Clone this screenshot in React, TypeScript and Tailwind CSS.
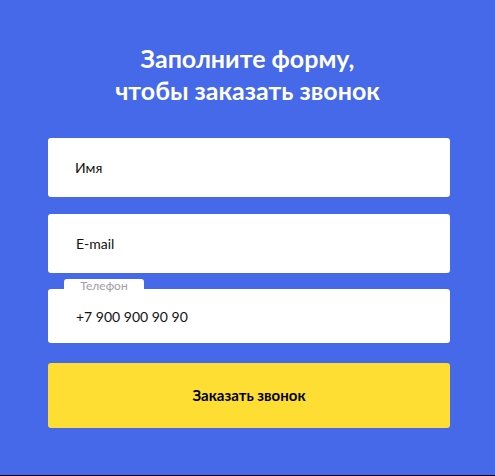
export default function App() {
  return (
    <div className="h-[476px] w-full bg-[#4569e8] border-b border-black font-['Lato',sans-serif]">
      <div className="flex flex-col items-center pt-[42px]">
        <h2 className="text-center text-[25px] font-bold leading-[32px] text-white">
          Заполните форму,
          <br />
          чтобы заказать звонок
        </h2>

        <form className="mt-[32px] ml-[3px] flex w-[402px] flex-col">
          <div className="flex h-[59px] items-center rounded-[3px] bg-white pl-[27px] text-[14px] text-[#111]">
            Имя
          </div>
          <div className="mt-[17px] flex h-[59px] items-center rounded-[3px] bg-white pl-[28px] text-[14px] text-[#111]">
            E-mail
          </div>

          <div className="relative mt-[16px]">
            <span className="absolute left-[16px] top-[-10px] flex h-[12px] w-[80px] justify-center rounded-t-[3px] bg-white pt-[1px] text-[12px] leading-[12px] text-[#a0a0a0]">
              Телефон
            </span>
            <div className="flex h-[54px] items-center rounded-[3px] bg-white pl-[28px] text-[14px] text-[#111]">
              +7 900 900 90 90
            </div>
          </div>

          <button
            type="button"
            className="mt-[20px] flex h-[65px] items-center justify-center rounded-[3px] bg-[#ffde33] text-[15px] font-bold text-black"
          >
            Заказать звонок
          </button>
        </form>
      </div>
    </div>
  );
}
